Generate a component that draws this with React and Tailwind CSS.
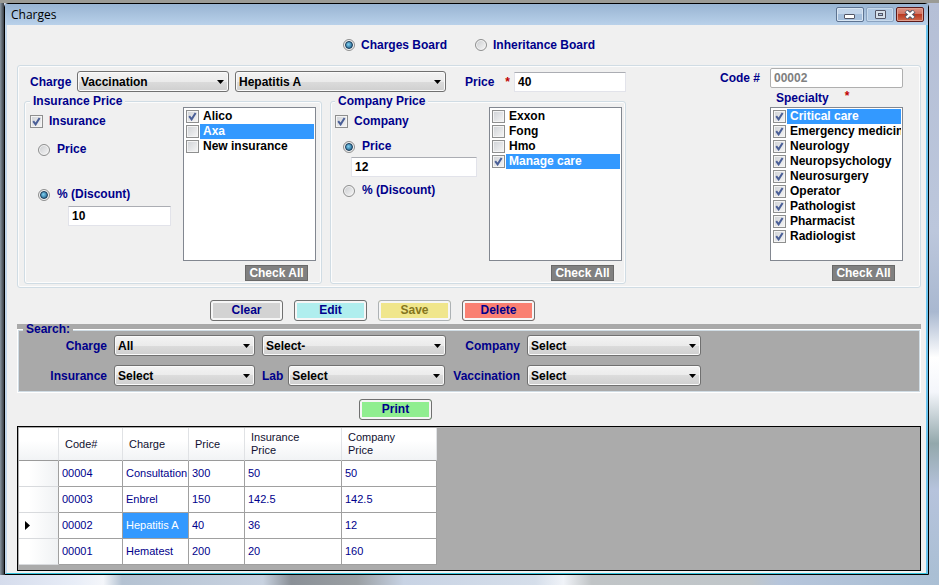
import { useState } from "react";
import clsx from "clsx";

const insurances = [
  { name: "Alico", checked: true },
  { name: "Axa", checked: false, selected: true },
  { name: "New insurance", checked: false },
];

const companies = [
  { name: "Exxon", checked: false },
  { name: "Fong", checked: false },
  { name: "Hmo", checked: false },
  { name: "Manage care", checked: true, selected: true },
];

const specialties = [
  { name: "Critical care", checked: true, selected: true },
  { name: "Emergency medicine", checked: true },
  { name: "Neurology", checked: true },
  { name: "Neuropsychology", checked: true },
  { name: "Neurosurgery", checked: true },
  { name: "Operator", checked: true },
  { name: "Pathologist", checked: true },
  { name: "Pharmacist", checked: true },
  { name: "Radiologist", checked: true },
];

const rows = [
  { code: "00004", charge: "Consultation", price: "300", insurance: "50", company: "50" },
  { code: "00003", charge: "Enbrel", price: "150", insurance: "142.5", company: "142.5" },
  { code: "00002", charge: "Hepatitis A", price: "40", insurance: "36", company: "12" },
  { code: "00001", charge: "Hematest", price: "200", insurance: "20", company: "160" },
];

const CheckBox = ({ id, defaultChecked }) => (
  <span className="grid size-[13px] shrink-0 place-items-center">
    <input
      id={id}
      type="checkbox"
      defaultChecked={defaultChecked}
      className="peer col-start-1 row-start-1 size-[13px] appearance-none border border-[#8e8f8f] bg-linear-to-br from-[#cfd2d6] to-[#f6f6f6] shadow-[inset_0_0_0_1px_#f4f4f4]"
    />
    <svg
      viewBox="0 0 9 9"
      className="pointer-events-none col-start-1 row-start-1 hidden size-[9px] peer-checked:block"
    >
      <path d="M1.2 4.2 L3.6 7.4 L7.6 1" fill="none" stroke="#4a5f97" strokeWidth="2" />
    </svg>
  </span>
);

const Radio = ({ id, name, defaultChecked }) => (
  <span className="grid size-3 shrink-0 place-items-center">
    <input
      id={id}
      name={name}
      type="radio"
      defaultChecked={defaultChecked}
      className="peer col-start-1 row-start-1 size-3 appearance-none rounded-full border border-[#8e8f8f] bg-linear-to-br from-[#c9cbce] to-[#f8f8f8] shadow-[inset_0_0_0_1px_#f4f4f4]"
    />
    <span className="pointer-events-none col-start-1 row-start-1 hidden size-2 rounded-full border border-[#173a58] bg-radial-[at_40%_40%] from-[#7fd0f2] to-[#12507c] peer-checked:block" />
  </span>
);

const Option = ({ id, label, className, children }) => (
  <div className={clsx("flex h-[13px] items-center leading-[13px]", className)}>
    {children}
    <label htmlFor={id} className="whitespace-nowrap">
      {label}
    </label>
  </div>
);

const Select = ({ id, value, className, label }) => (
  <div className={clsx("grid h-[21px] shrink-0 items-center", className)}>
    <select
      id={id}
      aria-label={label}
      defaultValue={value}
      className="col-start-1 row-start-1 h-[21px] w-full appearance-none rounded-[3px] border border-[#707070] bg-[linear-gradient(#f3f3f3_0%,#ebebeb_50%,#dcdcdc_50%,#cfcfcf_100%)] pr-4 pl-[3px] text-black shadow-[inset_0_0_0_1px_#fafafa]"
    >
      <option>{value}</option>
    </select>
    <svg viewBox="0 0 7 4" className="pointer-events-none col-start-1 row-start-1 mr-[5px] h-1 w-[7px] justify-self-end">
      <path d="M0 0 H7 L3.5 4 Z" fill="#000" />
    </svg>
  </div>
);

const TextBox = ({ id, value, className, label }) => (
  <input
    id={id}
    aria-label={label}
    type="text"
    defaultValue={value}
    className={clsx(
      "h-5 border border-[#e2e3ea] border-t-[#abadb3] bg-white px-[3px] text-black",
      className
    )}
  />
);

const CheckList = ({ prefix, items }) => (
  <div className="flex w-[133px] flex-col items-end gap-1">
    <ul className="h-[154px] w-full overflow-hidden border border-[#828790] bg-white py-px pr-px pl-0.5">
      {items.map((item) => {
        const id = `${prefix}-${item.name}`;
        return (
          <li key={item.name} className="flex h-[15px] items-center gap-px">
            <CheckBox id={id} defaultChecked={item.checked} />
            <label
              htmlFor={id}
              className={clsx(
                "min-w-0 flex-1 overflow-hidden pl-[3px] leading-[15px] whitespace-nowrap",
                item.selected ? "bg-[#3399ff] text-white" : "text-black"
              )}
            >
              {item.name}
            </label>
          </li>
        );
      })}
    </ul>
    <button
      type="button"
      className="mr-2 h-4 w-[63px] border border-[#696969] bg-[#808080] leading-[14px] whitespace-nowrap text-white"
    >
      Check All
    </button>
  </div>
);

const ActionButton = ({ children, className, disabled }) => (
  <button
    type="button"
    disabled={disabled}
    className={clsx(
      "h-[21px] w-[73px] rounded-[3px] border leading-[19px] shadow-[inset_0_0_0_2px_#f6f6f6]",
      disabled ? "border-[#adb2b5]" : "border-[#707070]",
      className
    )}
  >
    {children}
  </button>
);

const Required = () => <span className="self-start text-[#c00000]">*</span>;

const TitleBar = () => (
  <header className="flex h-[21px] items-center justify-between bg-linear-to-b from-[#98b4d2] to-[#b9d1ea] pr-1 pl-1.5">
    <h1 className="font-['Open_Sans',sans-serif] text-xs font-normal text-black">Charges</h1>
    <div className="flex gap-0.5">
      <button
        type="button"
        aria-label="Minimize"
        className="grid h-[15px] w-7 place-items-center rounded-[2px] border border-[#5d7391] bg-[linear-gradient(#c3d5ea_50%,#a5bfdc_50%)] shadow-[inset_0_0_0_1px_#d9e6f3]"
      >
        <svg viewBox="0 0 12 9" className="h-[9px] w-3">
          <rect x="0.5" y="4.5" width="10" height="4" rx="0.5" fill="#fff" stroke="#535666" />
        </svg>
      </button>
      <button
        type="button"
        aria-label="Maximize"
        className="grid h-[15px] w-7 place-items-center rounded-[2px] border border-[#8ba3c0] bg-[#b1c9e3] shadow-[inset_0_0_0_1px_#c8daec]"
      >
        <svg viewBox="0 0 11 9" className="h-[9px] w-[11px]">
          <rect x="0.5" y="0.5" width="10" height="8" rx="0.5" fill="#d6e0ea" stroke="#535666" />
          <rect x="3.5" y="3.5" width="4" height="2" fill="#b1c9e3" stroke="#535666" />
        </svg>
      </button>
      <button
        type="button"
        aria-label="Close"
        className="grid h-[15px] w-7 place-items-center rounded-[2px] border border-[#5c1a1a] bg-[linear-gradient(#dc9385_0%,#d0705f_50%,#b93a23_50%,#cf6a4c_100%)] shadow-[inset_0_0_0_1px_#e0a090]"
      >
        <svg viewBox="0 0 12 9" className="h-[9px] w-3">
          <path d="M2 1 L10 8 M10 1 L2 8" stroke="#535666" strokeWidth="4.4" />
          <path d="M2.4 1.3 L9.6 7.7 M9.6 1.3 L2.4 7.7" stroke="#fff" strokeWidth="2.4" />
        </svg>
      </button>
    </div>
  </header>
);

const ChargeForm = () => (
  <section className="flex justify-between rounded-[3px] border border-[#d0dce4] pr-[17px] pb-[3px] pl-1.5 shadow-[inset_0_0_0_1px_#fcfcfc]">
    <div className="flex flex-col gap-[3px] pt-[5px]">
      <div className="flex items-center pl-1.5">
        <label htmlFor="charge" className="w-[47px]">
          Charge
        </label>
        <Select id="charge" value="Vaccination" className="mr-1.5 w-[152px]" />
        <Select label="Charge item" value="Hepatitis A" className="w-[211px]" />
        <label htmlFor="price" className="ml-[19px] flex w-[49px] justify-between pr-1">
          Price <Required />
        </label>
        <TextBox id="price" value="40" className="w-[112px]" />
      </div>

      <div className="flex gap-2">
        <fieldset className="flex rounded-[3px] border border-[#d0dce4] px-[5px] pb-0.5 shadow-[inset_0_0_0_1px_#fcfcfc]">
          <legend className="bg-[#f0f0f0] px-[3px] leading-3">Insurance Price</legend>
          <div className="flex w-[153px] flex-col pt-2">
            <Option id="insurance" label="Insurance" className="gap-1.5">
              <CheckBox id="insurance" defaultChecked />
            </Option>
            <Option id="ins-price" label="Price" className="mt-[15px] gap-[7px] pl-2">
              <Radio id="ins-price" name="insurance-mode" />
            </Option>
            <Option id="ins-discount" label="% (Discount)" className="mt-8 gap-[7px] pl-2">
              <Radio id="ins-discount" name="insurance-mode" defaultChecked />
            </Option>
            <TextBox label="Insurance discount" value="10" className="mt-[5px] ml-[38px] w-[103px]" />
          </div>
          <CheckList prefix="insurance" items={insurances} />
        </fieldset>

        <fieldset className="flex rounded-[3px] border border-[#d0dce4] pr-[3px] pb-0.5 pl-1 shadow-[inset_0_0_0_1px_#fcfcfc]">
          <legend className="bg-[#f0f0f0] px-[3px] leading-3">Company Price</legend>
          <div className="flex w-[154px] flex-col pt-2">
            <Option id="company" label="Company" className="gap-1.5">
              <CheckBox id="company" defaultChecked />
            </Option>
            <Option id="com-price" label="Price" className="mt-3 gap-[7px] pl-2">
              <Radio id="com-price" name="company-mode" defaultChecked />
            </Option>
            <TextBox label="Company price" value="12" className="mt-1 ml-4 w-[126px]" />
            <Option id="com-discount" label="% (Discount)" className="mt-[7px] gap-[7px] pl-2">
              <Radio id="com-discount" name="company-mode" />
            </Option>
          </div>
          <CheckList prefix="company" items={companies} />
        </fieldset>
      </div>
    </div>

    <div className="flex gap-2.5 pt-0.5">
      <label htmlFor="code" className="leading-5">
        Code #
      </label>
      <div>
        <input
          id="code"
          type="text"
          disabled
          defaultValue="00002"
          className="block h-5 w-[133px] rounded-[2px] border border-[#afafaf] bg-white px-[3px] text-[#808080]"
        />
        <h2 className="flex h-[19px] items-center gap-4 pl-1.5">
          Specialty <Required />
        </h2>
        <CheckList prefix="specialty" items={specialties} />
      </div>
    </div>
  </section>
);

const SearchPanel = () => (
  <section className="mt-[3px] bg-[#a9a9a9]">
    <fieldset className="border border-white pb-1.5 shadow-[inset_0_0_0_1px_#d0dce4]">
      <legend className="ml-[5px] bg-[#a9a9a9] px-[3px] leading-[11px]">Search:</legend>
      <div className="grid grid-cols-[89px_141px_184px_67px_174px] items-center gap-x-[7px] gap-y-[9px] text-right">
        <label htmlFor="s-charge">Charge</label>
        <Select id="s-charge" value="All" />
        <Select label="Charge item filter" value="Select-" />
        <label htmlFor="s-company">Company</label>
        <Select id="s-company" value="Select" />

        <label htmlFor="s-insurance">Insurance</label>
        <Select id="s-insurance" value="Select" />
        <div className="flex items-center gap-[5px]">
          <label htmlFor="s-lab">Lab</label>
          <Select id="s-lab" value="Select" className="w-[157px]" />
        </div>
        <label htmlFor="s-vaccination">Vaccination</label>
        <Select id="s-vaccination" value="Select" />
      </div>
    </fieldset>
  </section>
);

const headCell =
  "h-[33px] border-r border-b border-r-[#e0e2e5] border-b-[#9a9a9a] bg-[linear-gradient(#ffffff_40%,#f1f3f5_100%)] pl-1.5 text-left align-middle leading-[13px] font-normal text-[#101030]";
const bodyCell = "h-[26px] border-r border-b border-[#a0a0a0] pl-[3px] whitespace-nowrap";

const ChargesGrid = () => {
  const [current, setCurrent] = useState("00002");

  return (
    <div className="mt-1.5 border border-black bg-[#ababab] pt-px pb-[5px] pl-px">
      <table className="w-[418px] table-fixed border-separate border-spacing-0 text-[11px] font-normal">
        <colgroup>
          <col className="w-10" />
          <col className="w-16" />
          <col className="w-[66px]" />
          <col className="w-14" />
          <col className="w-[97px]" />
          <col className="w-[95px]" />
        </colgroup>
        <thead>
          <tr>
            <th aria-label="Row" className={clsx(headCell, "border-r-[#a0a0a0]")} />
            <th className={headCell}>Code#</th>
            <th className={headCell}>Charge</th>
            <th className={headCell}>Price</th>
            <th className={headCell}>
              Insurance
              <br />
              Price
            </th>
            <th className={headCell}>
              Company
              <br />
              Price
            </th>
          </tr>
        </thead>
        <tbody>
          {rows.map((row) => (
            <tr key={row.code} onClick={() => setCurrent(row.code)} className="bg-white">
              <td className="h-[26px] border-r border-b border-r-[#a0a0a0] border-b-[#d8dadd] bg-[linear-gradient(90deg,#ffffff_25%,#f0f2f4_100%)] pl-1.5">
                {row.code === current && (
                  <svg viewBox="0 0 5 9" className="block h-[9px] w-[5px]">
                    <path d="M0 0 L5 4.5 L0 9 Z" fill="#000" />
                  </svg>
                )}
              </td>
              <td className={bodyCell}>{row.code}</td>
              <td className={clsx(bodyCell, row.code === current && "bg-[#3399ff] text-white")}>
                {row.charge}
              </td>
              <td className={bodyCell}>{row.price}</td>
              <td className={bodyCell}>{row.insurance}</td>
              <td className={bodyCell}>{row.company}</td>
            </tr>
          ))}
        </tbody>
      </table>
    </div>
  );
};

export default function App() {
  return (
    <div className="flex min-h-screen flex-col border-t-3 border-[#9b9b95] bg-[linear-gradient(90deg,#d5dcec_0%,#e8edf7_8%,#f4f6fa_11%,#b4c2d2_13%,#c8d2e0_28%,#8a9097_31%,#9a9fa3_38%,#c8d3e4_43%,#d5deea_57%,#f0f3f8_60%,#c0c4c6_63%,#c0c6ca_80%,#b6c5db_83%,#aabfd4_100%)] font-['Liberation_Sans',Arial,sans-serif] text-xs font-bold text-[#00008b]">
      <div className="flex">
        <div className="w-1 bg-linear-to-r from-[#8996a2] to-[#3a3f45]" />
        <main className="min-w-0 flex-1 rounded-t-[4px] border border-black bg-[#f0f0f0]">
          <TitleBar />
          <div className="border-x-2 border-b border-r-[#6cc4ee] border-b-[#35c3dc] border-l-[#c4d8ec] pr-[5px] pb-0.5 pl-2.5">
            <div className="flex h-10 items-center justify-center gap-7">
              <Option id="charges-board" label="Charges Board" className="gap-1.5">
                <Radio id="charges-board" name="board" defaultChecked />
              </Option>
              <Option id="inheritance-board" label="Inheritance Board" className="gap-1.5">
                <Radio id="inheritance-board" name="board" />
              </Option>
            </div>

            <ChargeForm />

            <div className="mt-3 flex gap-[11px] pl-[193px]">
              <ActionButton className="bg-[#d3d3d3]">Clear</ActionButton>
              <ActionButton className="bg-[#afeeee]">Edit</ActionButton>
              <ActionButton className="bg-[#f0e68c] text-[#857520]" disabled>
                Save
              </ActionButton>
              <ActionButton className="bg-[#fa8072]">Delete</ActionButton>
            </div>

            <SearchPanel />

            <div className="mt-1.5 flex pl-[342px]">
              <ActionButton className="bg-[#90ee90]">Print</ActionButton>
            </div>

            <ChargesGrid />
          </div>
        </main>
        <div className="w-2.5 bg-[linear-gradient(#b5bfd6_0%,#bcc7dc_40%,#a9b8d0_54%,#ffffff_62%,#f4f6fb_68%,#93a8ac_77%,#b6c3dc_85%,#aabfd4_100%)]" />
      </div>
    </div>
  );
}
